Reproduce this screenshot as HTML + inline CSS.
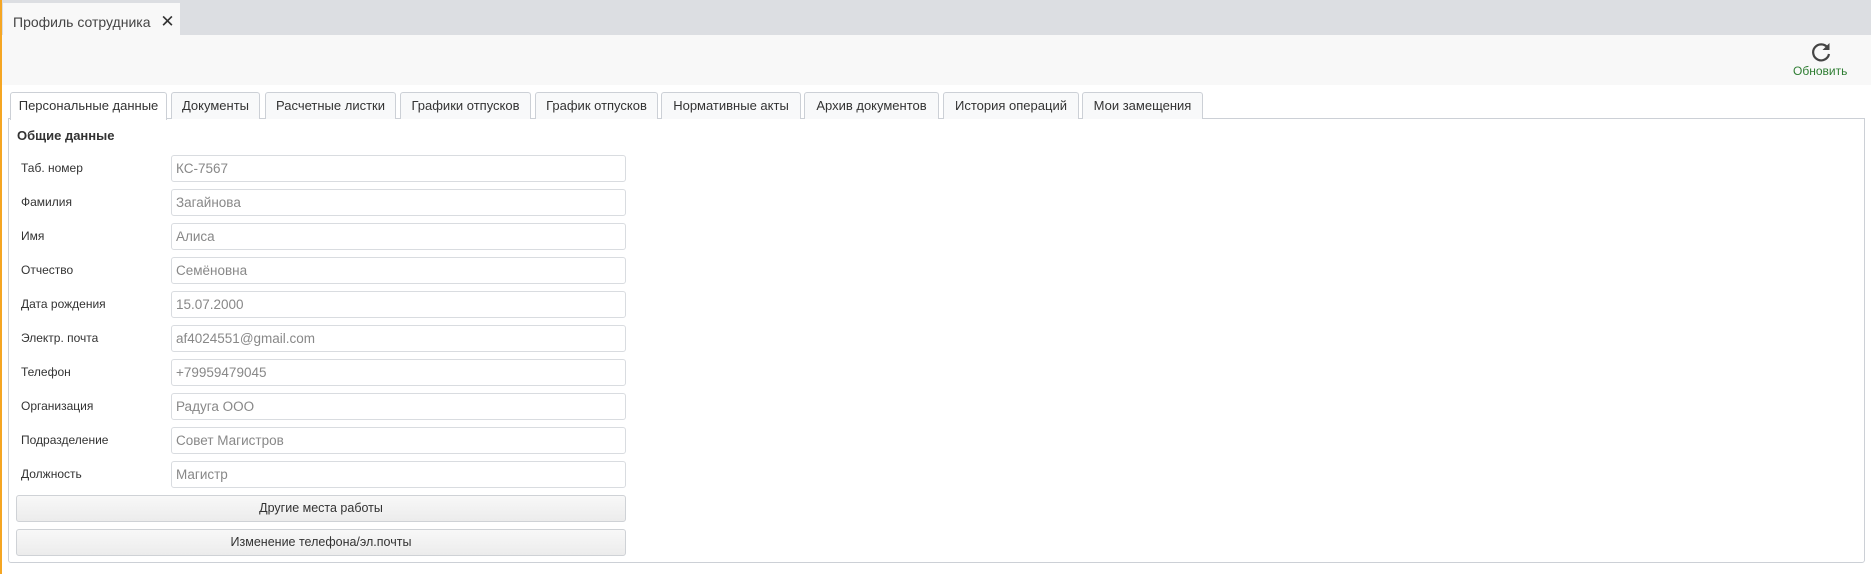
<!DOCTYPE html>
<html><head><meta charset="utf-8"><style>
*{box-sizing:border-box;margin:0;padding:0}
body{width:1871px;height:574px;background:#fff;font-family:"Liberation Sans","DejaVu Sans",sans-serif;position:relative;overflow:hidden;color:#333}
.abs{position:absolute}
.strip{left:0;top:0;width:1871px;height:35px;background:#dcdee2}
.ptab{left:3px;top:3px;width:177px;height:32px;background:#f8f8f8;font-size:14px;color:#444;padding:9px 0 0 10px}
.tool{left:0;top:35px;width:1871px;height:50px;background:#f8f8f8}
.orange{left:0;top:0;width:2px;height:574px;background:#f5a623}
.panel{left:8px;top:118px;width:1857px;height:445px;border:1px solid #ccd0d6;border-radius:0 0 3px 3px}
.tab{top:92px;height:27px;border:1px solid #ccd0d6;border-bottom:none;border-radius:3px 3px 0 0;background:#f8f9fa;font-size:13px;color:#333;text-align:center;line-height:25px;white-space:nowrap}
.tab.act{background:#fff;height:28px;z-index:2}
.lbl{left:21px;font-size:12px;color:#333}
.inp{left:171px;width:455px;height:27px;border:1px solid #d9dce0;border-radius:3px;font-size:13.5px;color:#888;padding:5px 0 0 4px}
.btn{left:16px;width:610px;height:27px;border:1px solid #cfd2d6;border-radius:3px;background:linear-gradient(#f8f8f8,#ececec);font-size:12.5px;color:#333;text-align:center;line-height:25px}
</style></head><body>
<div class="abs strip"></div>
<div class="abs ptab">Профиль сотрудника <span style="font-weight:bold;font-size:17px;margin-left:6px;color:#333">✕</span></div>
<div class="abs tool"></div>
<svg class="abs" style="left:1810px;top:41px" width="22" height="22" viewBox="0 0 22 22"><path d="M17.5 6.5A8 8 0 1 0 19 13" fill="none" stroke="#444" stroke-width="2.2"/><path d="M19.5 2v7h-7z" fill="#444"/></svg>
<div class="abs" style="left:1793px;top:64px;font-size:12px;color:#2e7d32">Обновить</div>
<div class="abs orange"></div>
<div class="abs panel"></div>
<div class="abs tab act" style="left:10px;width:157px">Персональные данные</div>
<div class="abs tab" style="left:171px;width:89px">Документы</div>
<div class="abs tab" style="left:265px;width:131px">Расчетные листки</div>
<div class="abs tab" style="left:400px;width:131px">Графики отпусков</div>
<div class="abs tab" style="left:535px;width:123px">График отпусков</div>
<div class="abs tab" style="left:661px;width:140px">Нормативные акты</div>
<div class="abs tab" style="left:804px;width:135px">Архив документов</div>
<div class="abs tab" style="left:943px;width:136px">История операций</div>
<div class="abs tab" style="left:1082px;width:121px">Мои замещения</div>
<div class="abs" style="left:17px;top:128px;font-size:13px;font-weight:bold;color:#333">Общие данные</div>

<div class="abs lbl" style="top:161px">Таб. номер</div><div class="abs inp" style="top:155px">КС-7567</div>
<div class="abs lbl" style="top:195px">Фамилия</div><div class="abs inp" style="top:189px">Загайнова</div>
<div class="abs lbl" style="top:229px">Имя</div><div class="abs inp" style="top:223px">Алиса</div>
<div class="abs lbl" style="top:263px">Отчество</div><div class="abs inp" style="top:257px">Семёновна</div>
<div class="abs lbl" style="top:297px">Дата рождения</div><div class="abs inp" style="top:291px">15.07.2000</div>
<div class="abs lbl" style="top:331px">Электр. почта</div><div class="abs inp" style="top:325px">af4024551@gmail.com</div>
<div class="abs lbl" style="top:365px">Телефон</div><div class="abs inp" style="top:359px">+79959479045</div>
<div class="abs lbl" style="top:399px">Организация</div><div class="abs inp" style="top:393px">Радуга ООО</div>
<div class="abs lbl" style="top:433px">Подразделение</div><div class="abs inp" style="top:427px">Совет Магистров</div>
<div class="abs lbl" style="top:467px">Должность</div><div class="abs inp" style="top:461px">Магистр</div>
<div class="abs btn" style="top:495px">Другие места работы</div>
<div class="abs btn" style="top:529px">Изменение телефона/эл.почты</div>
</body></html>
